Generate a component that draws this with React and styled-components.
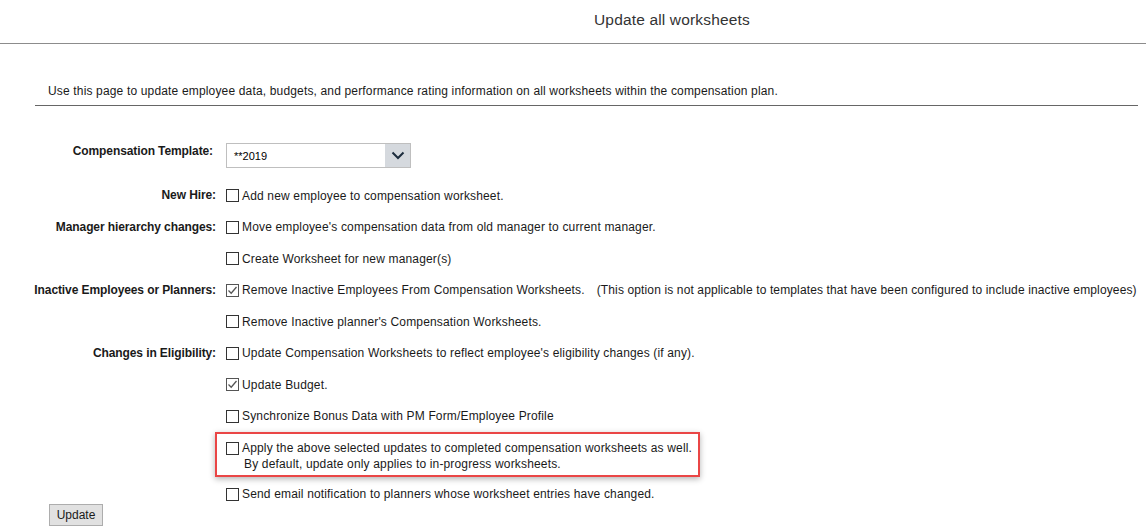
import React from 'react';
import styled, { createGlobalStyle } from 'styled-components';

const GlobalStyle = createGlobalStyle`
  body {
    margin: 0;
    background: #fff;
    font-family: "Liberation Sans", Arial, sans-serif;
    font-size: 12px;
    color: #1a1a1a;
    letter-spacing: 0.16px;
  }
`;

const Page = styled.div`
  width: 1146px;
  height: 530px;
  overflow: hidden;
`;

const Header = styled.header`
  height: 44px;
  border-bottom: 1px solid #8c8c8c;
  display: flex;
  align-items: center;
  padding-left: 594px;
  box-sizing: border-box;
  font-size: 15.5px;
  color: #333;
  padding-bottom: 4px;
`;

const Intro = styled.p`
  margin: 39px 8px 0 35px;
  padding: 0 0 6px 13px;
  border-bottom: 1px solid #666;
  line-height: 16px;
`;

const Form = styled.div`
  display: grid;
  grid-template-columns: 216px 1fr;
  column-gap: 10px;
  margin-top: 37px;
`;

const Label = styled.div`
  text-align: right;
  font-weight: bold;
  letter-spacing: -0.1px;
  line-height: ${p => (p.$top ? '16px' : '31.5px')};
  padding-right: ${p => (p.$top ? '3px' : '0')};
  white-space: nowrap;
`;

const Options = styled.div`
  display: flex;
  flex-direction: column;
  align-items: flex-start;
`;

const SelectBox = styled.div`
  width: 185px;
  height: 25px;
  box-sizing: border-box;
  border: 1px solid #bfbfbf;
  display: flex;
  align-items: stretch;
  margin-bottom: 12px;
`;

const SelectValue = styled.span`
  flex: 1;
  display: flex;
  align-items: center;
  padding-left: 7px;
  font-size: 11px;
  letter-spacing: 0;
  color: #000;
`;

const SelectArrow = styled.span`
  width: 25px;
  background: #d5d9de;
  display: flex;
  align-items: center;
  justify-content: center;
`;

const Row = styled.div`
  height: ${p => (p.$h ? p.$h : '31.5px')};
  margin-top: ${p => (p.$mt ? p.$mt : '0')};
  display: flex;
  align-items: center;
  white-space: nowrap;
`;

const Box = styled.span`
  width: 13px;
  height: 13px;
  box-sizing: border-box;
  border: 1px solid ${p => (p.$checked ? '#555' : '#333')};
  background: #fff;
  margin-right: 3px;
  flex-shrink: 0;
  display: flex;
  align-items: center;
  justify-content: center;
`;

const Note = styled.span`
  margin-left: 12px;
  letter-spacing: 0.13px;
`;

const Highlight = styled.div`
  margin-left: -11px;
  border: 2px solid #ea4646;
  box-shadow: 0 2px 6px rgba(0, 0, 0, 0.3);
  padding: 6px 6px 3px 9px;
  line-height: 16px;
`;

const HighlightLine = styled.div`
  display: flex;
  align-items: center;
  white-space: nowrap;
`;

const SubLine = styled.div`
  padding-left: 18px;
  white-space: nowrap;
`;

const Footer = styled.div`
  padding-left: 49px;
`;

const Button = styled.button`
  width: 54px;
  height: 22px;
  background: #e1e1e1;
  border: 1px solid #adadad;
  font-family: "Liberation Sans", Arial, sans-serif;
  font-size: 12px;
  color: #1a1a1a;
  padding: 0;
`;

const Check = ({ checked }) => (
  <Box $checked={checked}>
    {checked && (
      <svg width="11" height="11" viewBox="0 0 11 11">
        <path d="M1.5 5.5 L4.2 8.2 L9.5 2" fill="none" stroke="#555" strokeWidth="1.3" />
      </svg>
    )}
  </Box>
);

const Option = ({ checked, children, ...rest }) => (
  <Row {...rest}>
    <Check checked={checked} />
    {children}
  </Row>
);

export default function App() {
  return (
    <Page>
      <GlobalStyle />
      <Header>Update all worksheets</Header>
      <Intro>
        Use this page to update employee data, budgets, and performance rating information on all worksheets within the compensation plan.
      </Intro>
      <Form>
        <Label $top>Compensation Template:</Label>
        <Options>
          <SelectBox>
            <SelectValue>**2019</SelectValue>
            <SelectArrow>
              <svg width="14" height="9" viewBox="0 0 14 9">
                <path d="M1.5 1.5 L7 7 L12.5 1.5" fill="none" stroke="#1d2d3e" strokeWidth="2" />
              </svg>
            </SelectArrow>
          </SelectBox>
        </Options>

        <Label>New Hire:</Label>
        <Options>
          <Option>Add new employee to compensation worksheet.</Option>
        </Options>

        <Label>Manager hierarchy changes:</Label>
        <Options>
          <Option>Move employee's compensation data from old manager to current manager.</Option>
          <Option>Create Worksheet for new manager(s)</Option>
        </Options>

        <Label>Inactive Employees or Planners:</Label>
        <Options>
          <Option checked>
            Remove Inactive Employees From Compensation Worksheets.
            <Note>(This option is not applicable to templates that have been configured to include inactive employees)</Note>
          </Option>
          <Option>Remove Inactive planner's Compensation Worksheets.</Option>
        </Options>

        <Label>Changes in Eligibility:</Label>
        <Options>
          <Option>Update Compensation Worksheets to reflect employee's eligibility changes (if any).</Option>
          <Option checked>Update Budget.</Option>
          <Option>Synchronize Bonus Data with PM Form/Employee Profile</Option>
          <Highlight>
            <HighlightLine>
              <Check />
              Apply the above selected updates to completed compensation worksheets as well.
            </HighlightLine>
            <SubLine>By default, update only applies to in-progress worksheets.</SubLine>
          </Highlight>
          <Option $h="20px" $mt="7px">Send email notification to planners whose worksheet entries have changed.</Option>
        </Options>
      </Form>
      <Footer>
        <Button>Update</Button>
      </Footer>
    </Page>
  );
}
